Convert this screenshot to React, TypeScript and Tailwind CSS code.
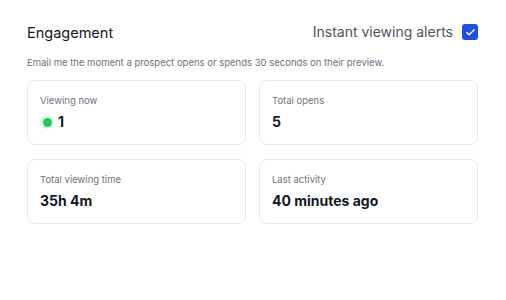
import { Check } from 'lucide-react';

interface Stat {
  label: string;
  value: string;
  live?: boolean;
}

const stats: Stat[] = [
  { label: 'Viewing now', value: '1', live: true },
  { label: 'Total opens', value: '5' },
  { label: 'Total viewing time', value: '35h 4m' },
  { label: 'Last activity', value: '40 minutes ago' },
];

function StatCard({ stat }: { stat: Stat }) {
  return (
    <div className="h-[65px] rounded-lg border border-[#e8e8ec] bg-white px-[12px] pt-[13px]">
      <div className="text-[9.5px] leading-[14px] text-[#6b7280]">{stat.label}</div>
      <div className="mt-[4px] flex items-center gap-[4px]">
        {stat.live && (
          <span className="flex h-[14px] w-[14px] items-center justify-center rounded-full bg-[#dcfce7]">
            <span className="h-[9px] w-[9px] rounded-full bg-[#22c55e]" />
          </span>
        )}
        <span className="text-[14px] font-bold leading-[20px] text-[#111827]">{stat.value}</span>
      </div>
    </div>
  );
}

export default function App() {
  return (
    <div className="h-[300px] w-[506px] bg-white px-[27px] pt-[20px] font-['Inter',sans-serif]">
      <div className="flex w-[451px] items-center justify-between">
        <h2 className="pt-[2px] text-[14.5px] font-normal leading-[22px] text-[#111827]">Engagement</h2>
        <label className="flex items-center gap-[9px]">
          <span className="text-[14px] leading-[22px] text-[#4b5563]">Instant viewing alerts</span>
          <span className="flex h-[16px] w-[16px] items-center justify-center rounded-[3px] bg-[#2350d9]">
            <Check className="h-[11px] w-[11px] text-white" strokeWidth={3} />
          </span>
        </label>
      </div>
      <p className="mt-[12px] text-[9.5px] leading-[14px] text-[#6b7280]">
        Email me the moment a prospect opens or spends 30 seconds on their preview.
      </p>
      <div className="mt-[10px] grid w-[451px] grid-cols-2 gap-x-[13px] gap-y-[14px]">
        {stats.map(s => (
          <StatCard key={s.label} stat={s} />
        ))}
      </div>
    </div>
  );
}
